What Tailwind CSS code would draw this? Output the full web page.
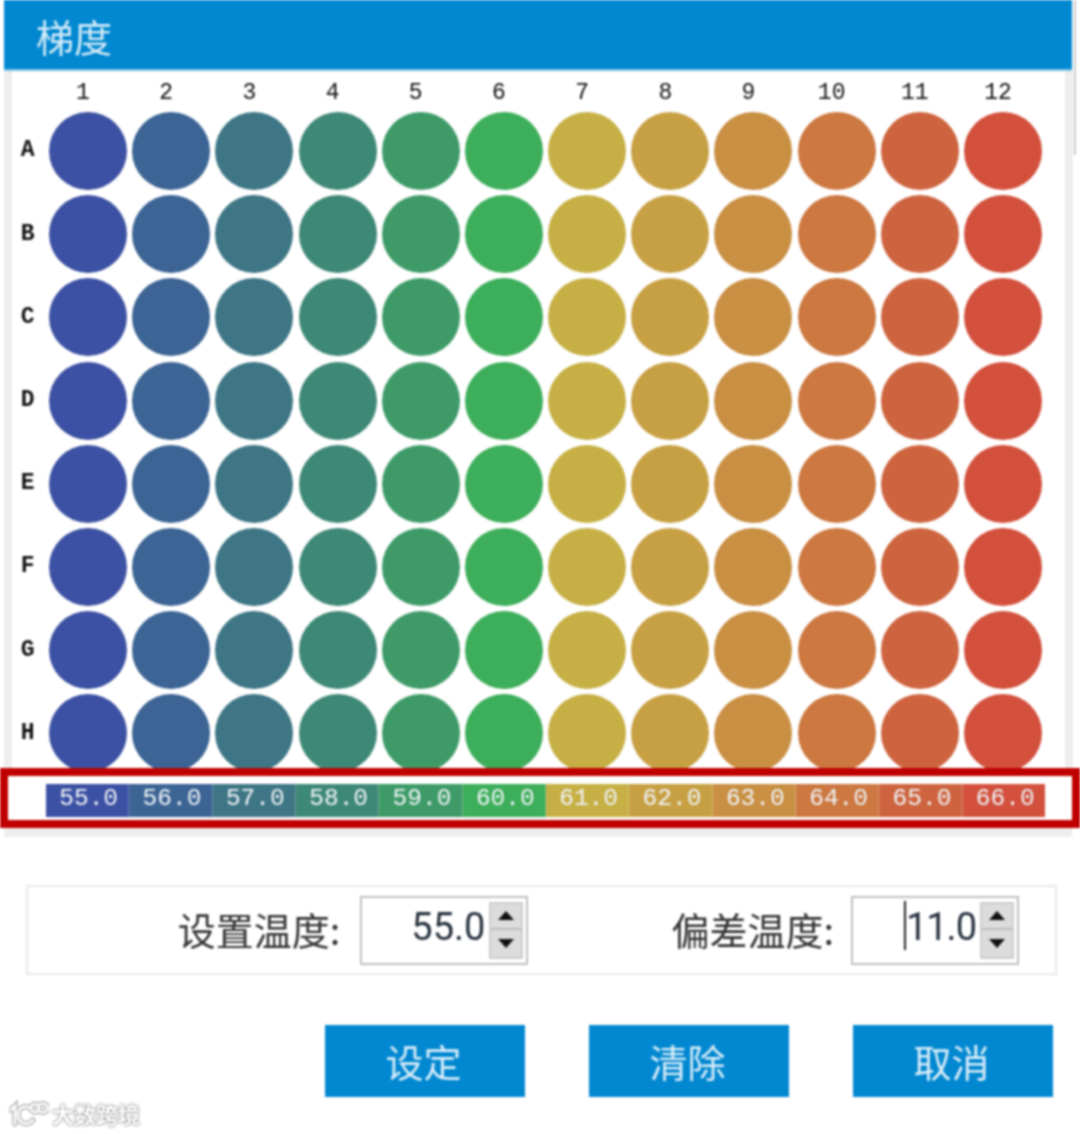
<!DOCTYPE html>
<html lang="zh-CN">
<head>
  <meta charset="UTF-8" />
  <title>梯度</title>
  <script src="https://cdn.jsdelivr.net/npm/@tailwindcss/browser@4"></script>
</head>
<body class="bg-white">
  <div class="relative w-[1080px] h-[1134px] overflow-hidden bg-white font-['Noto_Sans_CJK_SC','Noto_Sans',sans-serif] blur-[0.8px]">
    <header class="ml-[4px] w-[1068px] h-[71px] flex items-center pl-[32px] pt-[3px] bg-[#0288d1] border-b-2 border-[#7fc4e8] text-[38px] leading-none text-[#d3ebf8]">梯度</header>

    <!-- plate -->
    <section class="ml-[4px] w-[1069px] h-[697px] overflow-hidden border-l-[8px] border-r-[8px] border-[#eeeeee] bg-white">
      <div id="plate" class="grid grid-cols-[34.4px_repeat(12,83.2px)] grid-rows-[38.4px_repeat(8,83.2px)] font-['Liberation_Mono',monospace] text-[#111111]"></div>
    </section>

    <!-- legend -->
    <section class="h-[60px] border-8 border-[#c00000] bg-white pl-[38px] pt-[8px]">
      <div id="legend" class="flex w-[999px] h-[33px] font-['Liberation_Mono',monospace] text-[24.5px] leading-[30px] text-[#f0f4f8]"></div>
    </section>
    <div class="ml-[4px] w-[1068px] h-[9px] bg-[#eeeeee]"></div>

    <!-- temperature inputs -->
    <section class="mt-[48px] ml-[26px] w-[1031px] h-[90px] border-2 border-[#e8e8e8] flex items-center justify-end pr-[36px] text-[#333333]">
      <label class="text-[38px] leading-none mr-[20px] -mt-[3px]">设置温度:</label>
      <div class="w-[168px] h-[69px] border-2 border-[#c0c0c0] flex items-center justify-end pr-[3px] mr-[143px]">
        <span class="font-['Roboto',sans-serif] text-[38px] leading-none text-[#27323f] mr-[4px] -mt-[6px]">55.0</span>
        <div class="w-[34px] h-[57px] bg-[#dcdcdc] border-2 border-[#cdcdcd] flex flex-col">
          <div class="h-1/2 flex items-center justify-center border-b-2 border-[#bdbdbd]"><svg width="16" height="9" viewBox="0 0 16 9"><path d="M8 0L16 9H0Z" fill="#111"/></svg></div>
          <div class="h-1/2 flex items-center justify-center"><svg width="16" height="9" viewBox="0 0 16 9"><path d="M0 0H16L8 9Z" fill="#111"/></svg></div>
        </div>
      </div>
      <label class="text-[38px] leading-none mr-[17px] -mt-[3px]">偏差温度:</label>
      <div class="w-[168px] h-[69px] border-2 border-[#c0c0c0] flex items-center justify-end pr-[3px]">
        <span class="w-[2px] h-[49px] bg-[#222222] -mt-[10px]"></span>
        <span class="font-['Roboto',sans-serif] text-[38px] tracking-[-1px] leading-none text-[#27323f] mr-[4px] -mt-[6px]">11.0</span>
        <div class="w-[34px] h-[57px] bg-[#dcdcdc] border-2 border-[#cdcdcd] flex flex-col">
          <div class="h-1/2 flex items-center justify-center border-b-2 border-[#bdbdbd]"><svg width="16" height="9" viewBox="0 0 16 9"><path d="M8 0L16 9H0Z" fill="#111"/></svg></div>
          <div class="h-1/2 flex items-center justify-center"><svg width="16" height="9" viewBox="0 0 16 9"><path d="M0 0H16L8 9Z" fill="#111"/></svg></div>
        </div>
      </div>
    </section>

    <!-- buttons -->
    <section class="mt-[50px] flex justify-end gap-[64px] pr-[27px]">
      <button class="w-[200px] h-[72px] pr-[3px] bg-[#0288d1] text-[#d8edf9] text-[38px] leading-none">设定</button>
      <button class="w-[200px] h-[72px] pr-[3px] bg-[#0288d1] text-[#d8edf9] text-[38px] leading-none">清除</button>
      <button class="w-[200px] h-[72px] pr-[3px] bg-[#0288d1] text-[#d8edf9] text-[38px] leading-none">取消</button>
    </section>

    <!-- scrollbar sliver at the right edge -->
    <div class="absolute left-[1074px] top-0 w-[2px] h-[155px] bg-[#cccccc]"></div>

    <!-- watermark -->
    <div class="absolute left-[9px] top-[1099px] flex items-center gap-[3px]">
      <svg width="40" height="28" viewBox="0 0 40 28" fill="none" stroke-linecap="round">
        <g stroke="#b8b8b8" stroke-width="5.5">
          <path d="M2 11L6 7V25"/><path d="M21 9C14 5 8 11 9 17C10 25 19 27 24 21"/>
          <circle cx="26" cy="9" r="4"/><circle cx="34" cy="9" r="4.5"/>
        </g>
        <g stroke="#ffffff" stroke-width="2.5">
          <path d="M2 11L6 7V25"/><path d="M21 9C14 5 8 11 9 17C10 25 19 27 24 21"/>
          <circle cx="26" cy="9" r="4"/><circle cx="34" cy="9" r="4.5"/>
        </g>
      </svg>
      <span class="text-[22px] leading-none text-white font-bold [text-shadow:0_0_3px_#888,0_0_2px_#888]">大数跨境</span>
    </div>
  </div>

  <script>
    const colors = ['#3c51a3', '#3c6494', '#3e7685', '#3e8876', '#3e9b68', '#3dae5a', '#c6b045', '#c7a043', '#c98f43', '#cc7840', '#ce643f', '#d2503c'];
    const rows = ['A', 'B', 'C', 'D', 'E', 'F', 'G', 'H'];
    const plate = document.getElementById('plate');
    const legend = document.getElementById('legend');

    let html = '<div></div>';
    colors.forEach((c, i) => {
      html += `<div class="flex items-center justify-center pr-[10px] pt-[6px] text-[23px] leading-none">${i + 1}</div>`;
    });
    rows.forEach(r => {
      html += `<div class="flex items-center justify-center pr-[3px] text-[23px] font-bold leading-none">${r}</div>`;
      colors.forEach(c => {
        html += `<div class="flex items-center justify-center"><div class="w-[78px] h-[78px] rounded-full" style="background:${c}"></div></div>`;
      });
    });
    plate.innerHTML = html;

    // legend cells, 55.0 .. 66.0
    legend.innerHTML = colors.map((c, i) =>
      `<div class="flex-1 pl-[3px] text-center border-r border-white/25 last:border-r-0" style="background:${c}">${(55 + i).toFixed(1)}</div>`
    ).join('');
  </script>
</body>
</html>
